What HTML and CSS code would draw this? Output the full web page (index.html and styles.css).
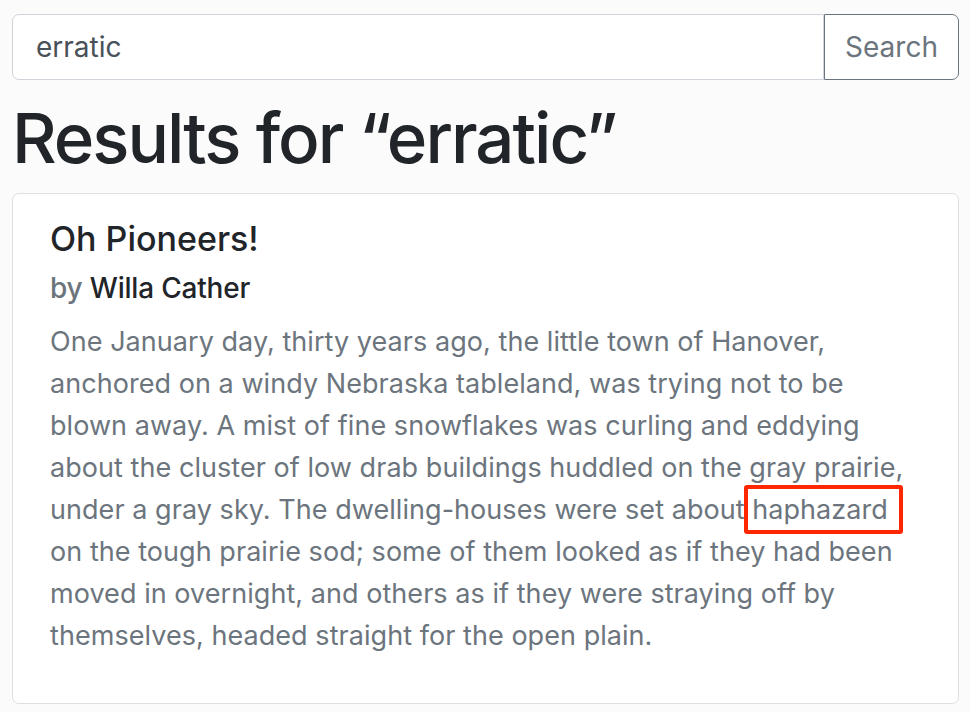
FILE: index.html
```html
<!DOCTYPE html>
<html lang="en">
<head>
<meta charset="utf-8">
<title>Results for “erratic”</title>
<link rel="stylesheet" href="styles.css">
</head>
<body>
<main class="page">
  <form class="search" onsubmit="return false">
    <input class="search-input" type="text" value="erratic" aria-label="Search">
    <button class="search-btn" type="submit">Search</button>
  </form>
  <h1 class="results-title">Results for “erratic”</h1>
  <article class="card">
    <h5 class="card-title">Oh Pioneers!</h5>
    <h6 class="card-subtitle"><span class="muted">by</span> Willa Cather</h6>
    <p class="card-text">One January day, thirty years ago, the little town of Hanover,<br>
anchored on a windy Nebraska tableland, was trying not to be<br>
blown away. A mist of fine snowflakes was curling and eddying<br>
about the cluster of low drab buildings huddled on the gray prairie,<br>
under a gray sky. The dwelling-houses were set about <span class="hit">haphazard</span><br>
on the tough prairie sod; some of them looked as if they had been<br>
moved in overnight, and others as if they were straying off by<br>
themselves, headed straight for the open plain.</p>
  </article>
</main>
</body>
</html>
```
FILE: styles.css
```css
html, body {
  margin: 0;
  padding: 0;
  background: #fbfbfb;
}
body {
  font-family: Inter, "Noto Sans", sans-serif;
  color: #212529;
}
.page {
  padding: 14px 11px 0 12px;
}
.search {
  display: flex;
  height: 66px;
}
.search-input {
  flex: 1;
  min-width: 0;
  box-sizing: border-box;
  height: 66px;
  margin: 0;
  padding: 0 23px;
  border: 1px solid #ced4da;
  border-radius: 7px 0 0 7px;
  background: #fff;
  font-family: inherit;
  font-size: 28px;
  color: #495057;
  outline: none;
}
.search-btn {
  box-sizing: border-box;
  width: 135px;
  height: 66px;
  margin: 0;
  padding: 0;
  border: 1px solid #6c757d;
  border-radius: 0 7px 7px 0;
  background: #fff;
  font-family: inherit;
  font-size: 28px;
  color: #6c757d;
}
.results-title {
  margin: 17px 0 13px 0;
  font-size: 69px;
  font-weight: 500;
  line-height: 1.2;
  letter-spacing: -2px;
}
.card {
  border: 1px solid #dfdfdf;
  border-radius: 7px;
  background: #fff;
  padding: 25px 20px 46px 37px;
}
.card-title {
  margin: 0 0 12px;
  font-size: 34px;
  font-weight: 500;
  line-height: 1.2;
}
.card-subtitle {
  margin: 0 0 16px;
  font-size: 28px;
  font-weight: 500;
  line-height: 1.2;
  letter-spacing: -0.2px;
}
.muted {
  color: #6c757d;
}
.card-text {
  margin: 0;
  font-size: 27px;
  line-height: 42px;
  letter-spacing: 0.05px;
  color: #6c757d;
  white-space: nowrap;
}
.hit {
  position: relative;
}
.hit::after {
  content: "";
  position: absolute;
  left: -8px;
  right: -15px;
  top: -8px;
  bottom: -8px;
  border: 4px solid #ff2600;
  border-radius: 3px;
}
```
